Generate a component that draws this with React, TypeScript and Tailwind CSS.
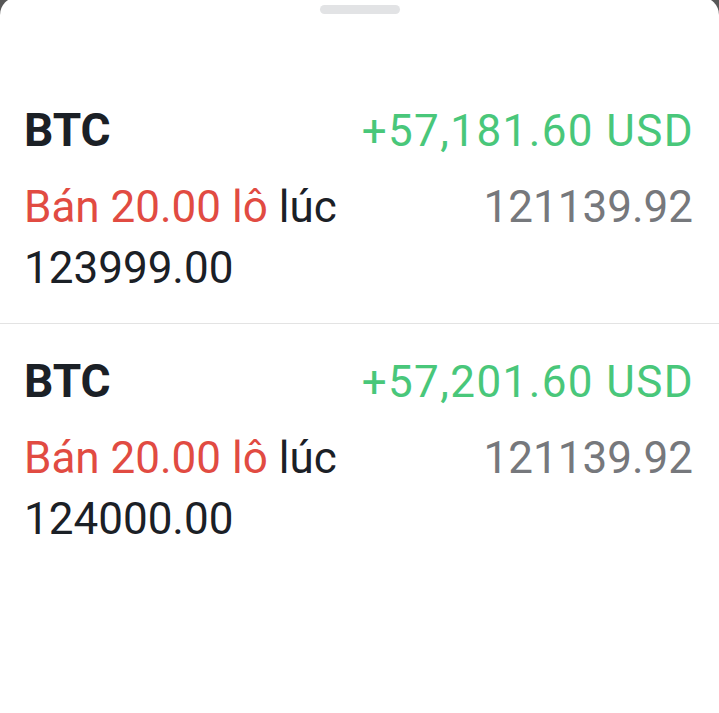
import React from "react";

type Trade = {
  symbol: string;
  profit: string;
  lots: string;
  openPrice: string;
  currentPrice: string;
};

const trades: Trade[] = [
  {
    symbol: "BTC",
    profit: "+57,181.60 USD",
    lots: "20.00",
    openPrice: "123999.00",
    currentPrice: "121139.92",
  },
  {
    symbol: "BTC",
    profit: "+57,201.60 USD",
    lots: "20.00",
    openPrice: "124000.00",
    currentPrice: "121139.92",
  },
];

function TradeRow({ trade, last }: { trade: Trade; last: boolean }) {
  return (
    <div
      className={
        last
          ? "pb-[24px] pl-6 pr-[26px] pt-[31px]"
          : "border-b border-[#e3e3e3] pb-[24px] pl-6 pr-[26px] pt-[31px]"
      }
    >
      <div className="flex items-baseline justify-between">
        <span className="text-[46px] font-bold leading-[52px] text-[#1b2026]">
          {trade.symbol}
        </span>
        <span className="-mr-[1px] text-[44px] leading-[52px] tracking-[1.4px] text-[#49c77a]">
          {trade.profit}
        </span>
      </div>
      <div className="mt-5 flex items-start justify-between gap-4">
        <p className="min-w-0 flex-1 text-[44px] leading-[61px] text-[#1b2026]">
          <span className="text-[#e14b42]">
            Bán {trade.lots} lô
          </span>{" "}
          lúc {trade.openPrice}
        </p>
        <span className="shrink-0 text-[44px] leading-[61px] text-[#76787c]">
          {trade.currentPrice}
        </span>
      </div>
    </div>
  );
}

export default function App() {
  return (
    <div
      className="h-[713px] w-[719px] overflow-hidden bg-[#575757]"
      style={{ fontFamily: "Roboto, 'Noto Sans', sans-serif" }}
    >
      <div className="-mt-[3px] h-[716px] rounded-t-[18px] bg-white">
        <div className="flex h-[76px] justify-center pt-[8px]">
          <div className="h-[9px] w-[80px] rounded-full bg-[#e2e3e5]" />
        </div>
        {trades.map((t, i) => (
          <TradeRow key={i} trade={t} last={i === trades.length - 1} />
        ))}
      </div>
    </div>
  );
}
